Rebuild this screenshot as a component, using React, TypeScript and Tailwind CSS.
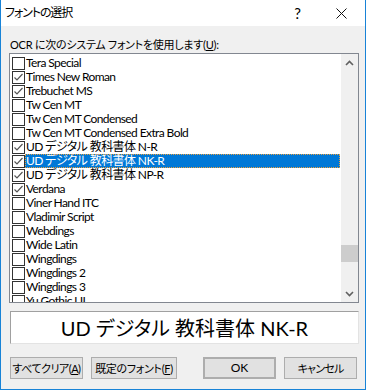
import React from 'react'

const fontList: [string, boolean][] = [
  ['Tera Special', false],
  ['Times New Roman', true],
  ['Trebuchet MS', true],
  ['Tw Cen MT', false],
  ['Tw Cen MT Condensed', false],
  ['Tw Cen MT Condensed Extra Bold', false],
  ['UD デジタル 教科書体 N-R', true],
  ['UD デジタル 教科書体 NK-R', true],
  ['UD デジタル 教科書体 NP-R', true],
  ['Verdana', true],
  ['Viner Hand ITC', false],
  ['Vladimir Script', false],
  ['Webdings', false],
  ['Wide Latin', false],
  ['Wingdings', false],
  ['Wingdings 2', false],
  ['Wingdings 3', false],
  ['Yu Gothic UI', false],
]

const selected = 'UD デジタル 教科書体 NK-R'

const CheckBox = ({ checked }: { checked: boolean }) => (
  <div className="w-[13px] h-[13px] border border-[#333333] bg-white shrink-0">
    {checked && (
      <svg width="11" height="11" viewBox="0 0 11 11">
        <polyline
          points="1.5,5.5 4,8 9.5,2"
          fill="none"
          stroke="#555555"
          strokeWidth="1.2"
        />
      </svg>
    )}
  </div>
)

const Btn = ({
  children,
  className = '',
}: {
  children: React.ReactNode
  className?: string
}) => (
  <button
    className={`h-[22px] bg-[#e1e1e1] border border-[#adadad] text-[11px] leading-none text-black whitespace-nowrap flex items-center justify-center ${className}`}
  >
    {children}
  </button>
)

export default function App() {
  return (
    <div
      className="w-[366px] h-[390px] bg-[#f0f0f0] border-x border-b border-[#1883d7] flex flex-col text-black [font-feature-settings:'palt']"
      style={{ fontFamily: 'Lato, "Noto Sans CJK JP", sans-serif' }}
    >
      {/* title bar */}
      <div className="h-[26px] bg-white flex items-center shrink-0">
        <span className="pl-[4px] text-[12px] tracking-[-1.1px]">フォントの選択</span>
        <span className="ml-auto mr-[35px] text-[15px] leading-none">?</span>
        <svg width="11" height="11" viewBox="0 0 11 11" className="mr-[18px]">
          <path d="M0.5 0.5 L10.5 10.5 M10.5 0.5 L0.5 10.5" stroke="#111" strokeWidth="1" />
        </svg>
      </div>

      <div className="pl-[9px] pt-[10px] text-[11px] leading-[17px] tracking-[-0.25px]">
        OCR に次のシステム フォントを使用します(<span className="underline">U</span>):
      </div>

      {/* font list */}
      <div className="ml-[8px] w-[350px] h-[250px] border border-[#828790] bg-white flex shrink-0">
        <div className="flex-1 overflow-hidden pt-[2px] pl-[2px]">
          {fontList.map(([name, checked]) => {
            const isSel = name === selected
            return (
              <div key={name} className="h-[14px] flex items-center">
                <CheckBox checked={checked} />
                <span
                  className={`h-[14px] flex items-center pl-[1px] text-[12px] tracking-[-0.6px] whitespace-nowrap ${
                    isSel
                      ? 'flex-1 mr-[1px] bg-[#0078d7] text-white outline outline-1 outline-dotted outline-[#e8a040] -outline-offset-1'
                      : ''
                  }`}
                >
                  {name}
                </span>
              </div>
            )
          })}
        </div>
        {/* scrollbar */}
        <div className="w-[17px] bg-[#f0f0f0] flex flex-col items-center">
          <div className="h-[17px] flex items-center justify-center">
            <svg width="9" height="6" viewBox="0 0 9 6">
              <path d="M1 5 L4.5 1.5 L8 5" fill="none" stroke="#606060" strokeWidth="1.6" />
            </svg>
          </div>
          <div className="flex-1 w-full flex flex-col">
            <div className="h-[174px]" />
            <div className="h-[17px] w-full bg-[#cdcdcd]" />
          </div>
          <div className="h-[17px] flex items-center justify-center">
            <svg width="9" height="6" viewBox="0 0 9 6">
              <path d="M1 1 L4.5 4.5 L8 1" fill="none" stroke="#606060" strokeWidth="1.6" />
            </svg>
          </div>
        </div>
      </div>

      {/* preview */}
      <div className="ml-[9px] mt-[8px] w-[349px] h-[33px] bg-white border border-t-[#a0a0a0] border-l-[#a0a0a0] border-r-[#e3e3e3] border-b-[#e3e3e3] flex items-center justify-center shrink-0">
        <span className="text-[20px] leading-none">UD デジタル 教科書体 NK-R</span>
      </div>

      {/* buttons */}
      <div className="flex mt-[13px] pl-[9px]">
        <Btn className="w-[73px] tracking-[-0.5px]">
          すべてクリア(<span className="underline">A</span>)
        </Btn>
        <Btn className="w-[86px] ml-[8px] tracking-[-0.3px]">
          既定のフォント(<span className="underline">F</span>)
        </Btn>
        <Btn className="w-[73px] ml-[26px] border-2 border-[#0078d7] text-[12px]">OK</Btn>
        <Btn className="w-[73px] ml-[8px] tracking-[-0.8px]">キャンセル</Btn>
      </div>
    </div>
  )
}
